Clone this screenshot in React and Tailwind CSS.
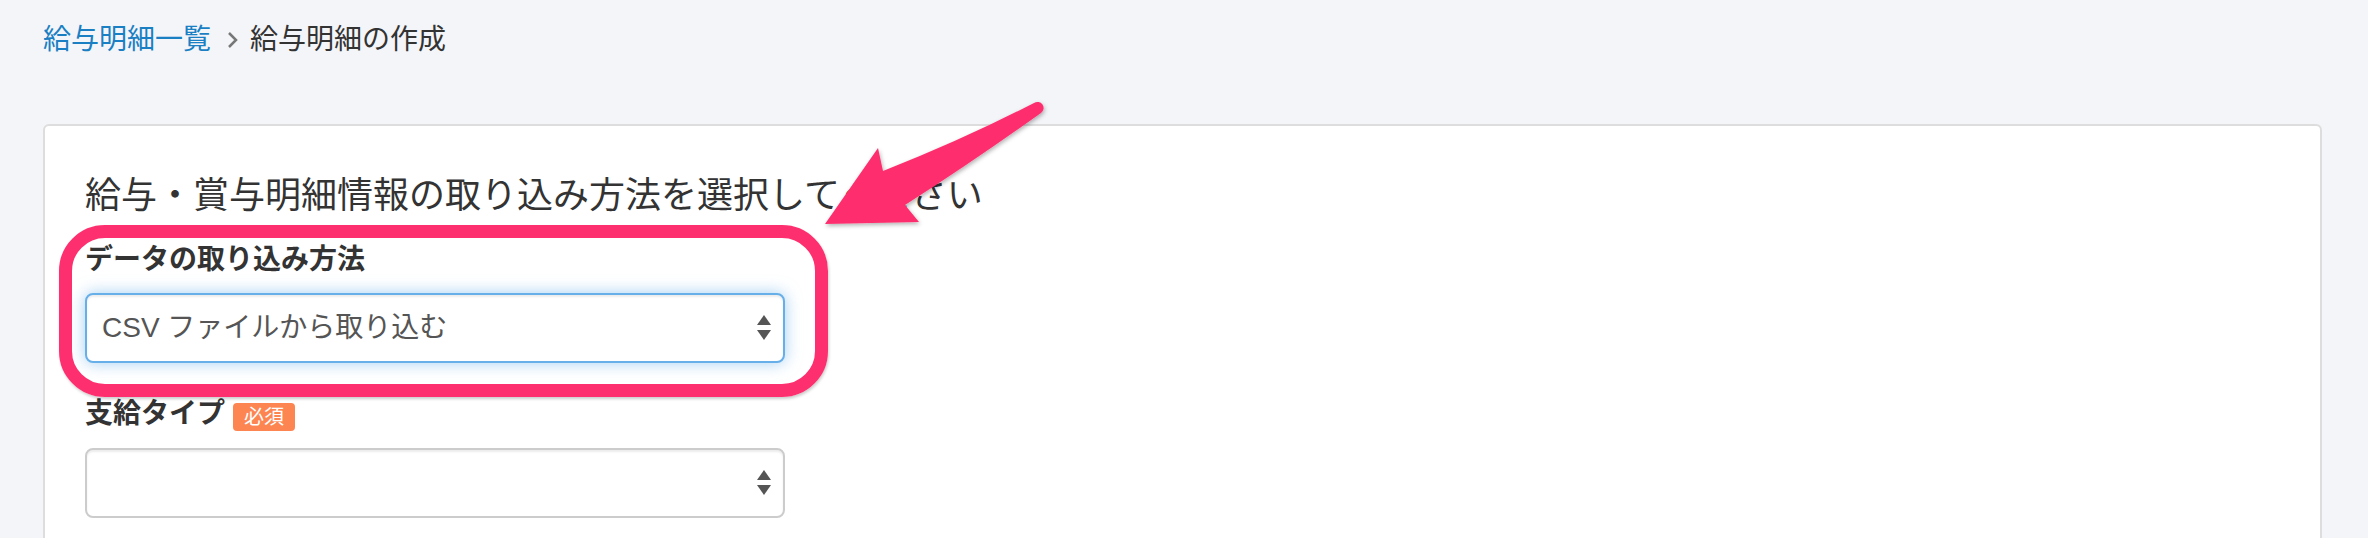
import React from "react";

const font = {
  fontFamily: '"Liberation Sans", "Noto Sans CJK JP", sans-serif',
};

function SelectArrows() {
  return (
    <svg width="14" height="26" viewBox="0 0 14 26" className="shrink-0">
      <path d="M7 0 L14 10 L0 10 Z" fill="#555" />
      <path d="M0 15 L14 15 L7 25 Z" fill="#555" />
    </svg>
  );
}

function FakeSelect({ value, focused }) {
  return (
    <div
      className={
        "flex items-center justify-between h-[70px] w-[700px] rounded-[8px] border-2 bg-white pl-[15px] pr-[12px] " +
        (focused
          ? "border-[#66afe9] shadow-[inset_0_2px_2px_rgba(0,0,0,0.075),0_0_16px_rgba(102,175,233,0.6)]"
          : "border-[#cccccc] shadow-[inset_0_2px_2px_rgba(0,0,0,0.075)]")
      }
    >
      <span className="text-[28px] text-[#555]">{value}</span>
      <SelectArrows />
    </div>
  );
}

function Arrow() {
  return (
    <svg
      className="absolute left-0 top-0 pointer-events-none"
      width="1100"
      height="260"
      viewBox="0 0 1100 260"
    >
      <defs>
        <filter id="sh" x="-10%" y="-10%" width="130%" height="130%">
          <feDropShadow dx="1" dy="2" stdDeviation="2" floodColor="#000" floodOpacity="0.3" />
        </filter>
      </defs>
      <path
        d="M825 224 L878 148 L883 171 Q962 140 1034 103 A5.5 5.5 0 0 1 1041 113 Q968 165 905 205 L919 222 Z"
        fill="#fe2f6e"
        filter="url(#sh)"
      />
    </svg>
  );
}

export default function App() {
  return (
    <div className="relative h-[538px] overflow-hidden bg-[#f4f5f9] text-[#333]" style={font}>
      {/* breadcrumb */}
      <div className="flex items-center pl-[43px] pt-[20px] text-[28px] leading-[40px]">
        <span className="text-[#1a7fc3]">給与明細一覧</span>
        <svg width="11" height="18" viewBox="0 0 11 18" className="ml-[16px] mr-[12px]">
          <path d="M2 2 L9 9 L2 16" fill="none" stroke="#777" strokeWidth="2.5" />
        </svg>
        <span>給与明細の作成</span>
      </div>

      {/* card */}
      <div className="ml-[43px] mr-[46px] mt-[64px] h-[500px] rounded-[6px] border-2 border-[#dddddd] bg-white pl-[40px] pt-[50px]">
        <h2 className="text-[36px] leading-[40px] font-normal">
          給与・賞与明細情報の取り込み方法を選択してください
        </h2>

        <div className="mt-[24px] text-[28px] font-bold leading-[40px]">
          データの取り込み方法
        </div>
        <div className="mt-[13px]">
          <FakeSelect value="CSV ファイルから取り込む" focused />
        </div>

        <div className="mt-[31px] flex items-center text-[28px] font-bold leading-[40px]">
          <span>支給タイプ</span>
          <span className="ml-[8px] mt-[6px] rounded-[4px] bg-[#fd8552] px-[11px] text-[20px] font-normal leading-[28px] text-white">
            必須
          </span>
        </div>
        <div className="mt-[14px]">
          <FakeSelect value="" />
        </div>
      </div>

      {/* annotation */}
      <div className="absolute left-[59px] top-[225px] h-[172px] w-[769px] rounded-[46px] border-[13px] border-[#fe2f6e] shadow-[1px_2px_3px_rgba(0,0,0,0.2)] pointer-events-none" />
      <Arrow />
    </div>
  );
}
